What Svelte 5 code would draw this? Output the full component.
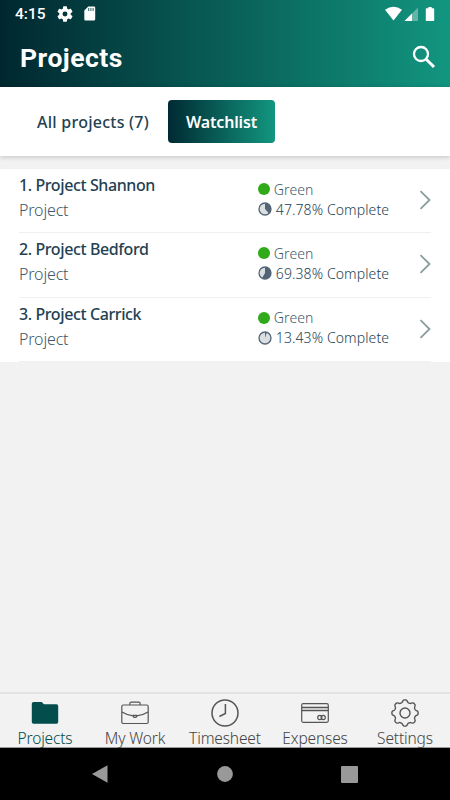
<script lang="ts">
	type Project = { name: string; kind: string; status: string; complete: number };

	const projects: Project[] = [
		{ name: 'Project Shannon', kind: 'Project', status: 'Green', complete: 47.78 },
		{ name: 'Project Bedford', kind: 'Project', status: 'Green', complete: 69.38 },
		{ name: 'Project Carrick', kind: 'Project', status: 'Green', complete: 13.43 }
	];
	const tabs = ['Projects', 'My Work', 'Timesheet', 'Expenses', 'Settings'];

	let view = $state('watchlist');
	let activeTab = $state('Projects');

	function pie(percent: number) {
		const steps = percent < 20 ? 0.6 : percent < 50 ? 4.6 : 7;
		const angle = (steps / 12) * Math.PI * 2;
		const x = 7 + 6 * Math.sin(angle);
		const y = 7 - 6 * Math.cos(angle);
		return `M7 7V1A6 6 0 ${angle > Math.PI ? 1 : 0} 1 ${x.toFixed(2)} ${y.toFixed(2)}Z`;
	}

	function cog() {
		const points: string[] = [];
		for (let i = 0; i < 160; i++) {
			const a = (i / 160) * Math.PI * 2;
			const wave = Math.cos(a * 8);
			const r = 11.9 + 1.35 * Math.tanh(wave * 1.5);
			points.push(`${(14 + r * Math.sin(a)).toFixed(2)} ${(14 - r * Math.cos(a)).toFixed(2)}`);
		}
		return `M${points.join('L')}Z`;
	}
</script>

<div class="app">
	<header>
		<div class="status-bar">
			<span class="time">4:15</span>
			<svg width="16" height="16" viewBox="2 2 20 20" fill="#fff">
				<path
					d="M19.14 12.94c.04-.3.06-.61.06-.94s-.02-.64-.07-.94l2.03-1.58a.49.49 0 0 0 .12-.61l-1.92-3.32a.49.49 0 0 0-.59-.22l-2.39.96a7 7 0 0 0-1.62-.94L14.4 2.81a.48.48 0 0 0-.48-.41h-3.84a.47.47 0 0 0-.47.41l-.36 2.54a7.4 7.4 0 0 0-1.62.94l-2.39-.96a.48.48 0 0 0-.59.22L2.74 8.87a.47.47 0 0 0 .12.61l2.03 1.58a7 7 0 0 0-.02 1.88l-2.03 1.58a.49.49 0 0 0-.12.61l1.92 3.32c.12.22.37.29.59.22l2.39-.96c.5.38 1.03.7 1.62.94l.36 2.54c.05.24.24.41.48.41h3.84c.24 0 .44-.17.47-.41l.36-2.54a7 7 0 0 0 1.62-.94l2.39.96c.22.08.47 0 .59-.22l1.92-3.32a.47.47 0 0 0-.12-.61zM12 15.1a3.1 3.1 0 1 1 0-6.2 3.1 3.1 0 0 1 0 6.2z"
				/>
			</svg>
			<svg class="card" width="12" height="15" viewBox="0 0 12 15">
				<path
					d="M4.3.5H10a1.2 1.2 0 0 1 1.2 1.2v11.5a1.2 1.2 0 0 1-1.2 1.2H1.5a1.2 1.2 0 0 1-1.2-1.2V4.5z"
					fill="#fff"
				/>
				<path d="M4.7 2v3M6.9 2v3M9.1 2v3" stroke="#29645f" />
			</svg>
			<svg class="signals" width="52" height="16" viewBox="0 0 52 16" fill="#fff">
				<path d="M0 3.7Q8.5-2.2 17 3.7L8.5 14.5z" />
				<path d="M19.5 15 33 1.5V15z" opacity=".35" />
				<path d="M19.5 15 27 7.5V15z" />
				<path
					d="M43.3 1h3.4v1.2h1.8q.7 0 .7.7v11.4q0 .7-.7.7h-7q-.7 0-.7-.7V2.9q0-.7.7-.7h1.8z"
				/>
			</svg>
		</div>
		<div class="title-bar">
			<h1>Projects</h1>
			<button aria-label="Search">
				<svg width="24" height="24" viewBox="0 0 24 24" fill="none" stroke="#fff">
					<circle cx="9" cy="9" r="7" stroke-width="2.3" />
					<path d="m14.2 14.2 7.8 7.8" stroke-width="3" />
				</svg>
			</button>
		</div>
	</header>

	<div class="filters">
		<button class="filter all" class:selected={view === 'all'} onclick={() => (view = 'all')}>
			All projects (7)
		</button>
		<button
			class="filter"
			class:selected={view === 'watchlist'}
			onclick={() => (view = 'watchlist')}
		>
			Watchlist
		</button>
	</div>

	<main>
		{#each projects as project, i}
			<div class="row">
				<div class="row-inner">
					<div class="names">
						<div class="name">{i + 1}. {project.name}</div>
						<div class="kind">{project.kind}</div>
					</div>
					<div class="progress">
						<div class="line status">
							<span class="dot"></span>
							<span>{project.status}</span>
						</div>
						<div class="line">
							<svg width="14" height="14" viewBox="0 0 14 14">
								<circle cx="7" cy="7" r="6" fill="#dcdfe2" stroke="#526475" stroke-width="1.3" />
								<path d={pie(project.complete)} fill="#526475" />
							</svg>
							<span>{project.complete}% Complete</span>
						</div>
					</div>
					<svg class="chevron" width="12" height="20" viewBox="0 0 12 20">
						<path
							d="M1.5 1.2 10.5 10l-9 8.8"
							fill="none"
							stroke="#8b9c9e"
							stroke-width="1.8"
						/>
					</svg>
				</div>
			</div>
		{/each}
	</main>

	<nav>
		{#each tabs as tab}
			<button class="tab" class:active={activeTab === tab} onclick={() => (activeTab = tab)}>
				<svg width="28" height="28" viewBox="0 0 28 28" fill="none" stroke="#555" stroke-width="1.2">
					{#if tab === 'Projects'}
						<path
							d="M2.5 3h8.2L13 5.300h12.500q1.700 0 1.700 1.700v16q0 1.700-1.700 1.700h-23Q.8 24.700.8 23V4.700Q.8 3 2.500 3z"
							fill="#034d4c"
							stroke="none"
						/>
					{:else if tab === 'My Work'}
						<rect x=".8" y="6" width="26.4" height="18.5" rx="1.5" />
						<path
							d="M8.8 6V4.700q0-1.500 1.500-1.500h7.400q1.500 0 1.500 1.500V6M1 13q5.500 3.500 11.300 3.800M27 13q-5.500 3.500-11.300 3.800"
						/>
						<path d="M12.300 16.300h3.400v1.200q-1.700 2-3.400 0z" />
					{:else if tab === 'Timesheet'}
						<circle cx="14" cy="14" r="13" stroke-width="1.5" />
						<path d="M14.400 5v9.500l-6 3" stroke-width="1.5" />
					{:else if tab === 'Expenses'}
						<rect x=".7" y="4.700" width="26.600" height="18.600" rx="1.5" />
						<path d="M.7 8.500h26.600M.7 11.500h26.600" stroke-width="1.4" />
						<circle cx="18.800" cy="18.500" r="2.100" />
						<circle cx="22.200" cy="18.500" r="2.100" />
					{:else}
						<path d={cog()} stroke-width="1.4" />
						<circle cx="14" cy="14" r="5" stroke-width="1.4" />
					{/if}
				</svg>
				<span>{tab}</span>
			</button>
		{/each}
	</nav>

	<footer>
		<svg width="16" height="18" viewBox="0 0 16 18"><path d="M0 9 15.500.2v17.600z" /></svg>
		<svg width="16" height="16" viewBox="0 0 16 16"><circle cx="8" cy="8" r="7.900" /></svg>
		<svg width="17" height="17" viewBox="0 0 17 17"><rect width="17" height="17" rx="1" /></svg>
	</footer>
</div>

<style>
	:global(body) {
		margin: 0;
	}
	.app {
		display: flex;
		flex-direction: column;
		width: 450px;
		height: 800px;
		overflow: hidden;
		background: #f2f2f2;
		color: #234152;
		font-family: 'Noto Sans', 'Open Sans', sans-serif;
	}
	button {
		padding: 0;
		border: 0;
		background: none;
		color: inherit;
		font: inherit;
		cursor: pointer;
	}
	svg {
		display: block;
		flex: none;
	}
	header {
		height: 87px;
		background: linear-gradient(90deg, #00272f, #129680);
		color: #fff;
		font-family: Roboto, sans-serif;
	}
	.status-bar {
		display: flex;
		align-items: center;
		height: 27px;
		padding: 0 15px;
	}
	.time {
		width: 42px;
		font-size: 15.5px;
		font-weight: 500;
		line-height: 28px;
	}
	.card {
		margin-left: 11px;
	}
	.signals {
		margin-left: auto;
		margin-right: -2px;
	}
	.title-bar {
		display: flex;
		align-items: center;
		justify-content: space-between;
		height: 60px;
		padding: 0 14px 0 20px;
	}
	h1 {
		margin: 1px 0 0;
		font-size: 26.5px;
		font-weight: 700;
		line-height: 32px;
		letter-spacing: 0.5px;
	}
	.filters {
		display: flex;
		align-items: center;
		gap: 1px;
		height: 69px;
		padding-left: 19px;
		background: #fff;
		box-shadow: 0 1px 5px rgba(0, 0, 0, 0.2);
	}
	.filter {
		height: 43px;
		padding-top: 1px;
		border-radius: 4px;
		font-size: 16px;
		font-weight: 600;
		white-space: nowrap;
		letter-spacing: -0.15px;
	}
	.filter.all {
		width: 148px;
		font-weight: 500;
		letter-spacing: 0.25px;
	}
	.filter.selected {
		width: 107px;
		background: linear-gradient(90deg, #002a33, #129680);
		color: #fff;
	}
	main {
		flex: 1;
		padding-top: 13px;
	}
	.row {
		height: 64.3px;
		padding: 0 19px;
		background: #fff;
	}
	.row-inner {
		display: flex;
		box-sizing: border-box;
		height: 64.3px;
		border-bottom: 1px solid #f0f0f0;
	}
	.names {
		width: 239px;
		padding-top: 4px;
	}
	.name {
		font-size: 16px;
		font-weight: 500;
		line-height: 25px;
		letter-spacing: -0.4px;
	}
	.kind {
		font-size: 16px;
		font-weight: 300;
		line-height: 25px;
		letter-spacing: -0.15px;
		color: #405868;
	}
	.progress {
		width: 162px;
		padding-top: 10px;
		font-size: 14px;
		font-weight: 300;
		letter-spacing: 0.1px;
	}
	.line {
		display: flex;
		align-items: center;
		gap: 4px;
		height: 20px;
		padding-left: 1px;
		white-space: nowrap;
	}
	.status {
		color: #405868;
	}
	.dot {
		width: 12px;
		height: 12px;
		border-radius: 50%;
		background: #30aa19;
	}
	.chevron {
		margin-top: 21px;
		margin-left: 1px;
	}
	nav {
		display: flex;
		box-sizing: border-box;
		height: 56px;
		border-top: 2px solid #e2e2e2;
		border-bottom: 1px solid #999;
	}
	.tab {
		display: flex;
		flex: 1;
		flex-direction: column;
		align-items: center;
		justify-content: flex-start;
		padding-top: 5px;
		color: #444;
		font-size: 15.5px;
		font-weight: 300;
		line-height: 22px;
		letter-spacing: -0.15px;
		white-space: nowrap;
	}
	.tab.active {
		color: #034d4c;
	}
	footer {
		display: flex;
		align-items: center;
		justify-content: space-between;
		height: 52px;
		padding: 0 92px;
		background: #000;
		fill: #999;
	}
</style>
